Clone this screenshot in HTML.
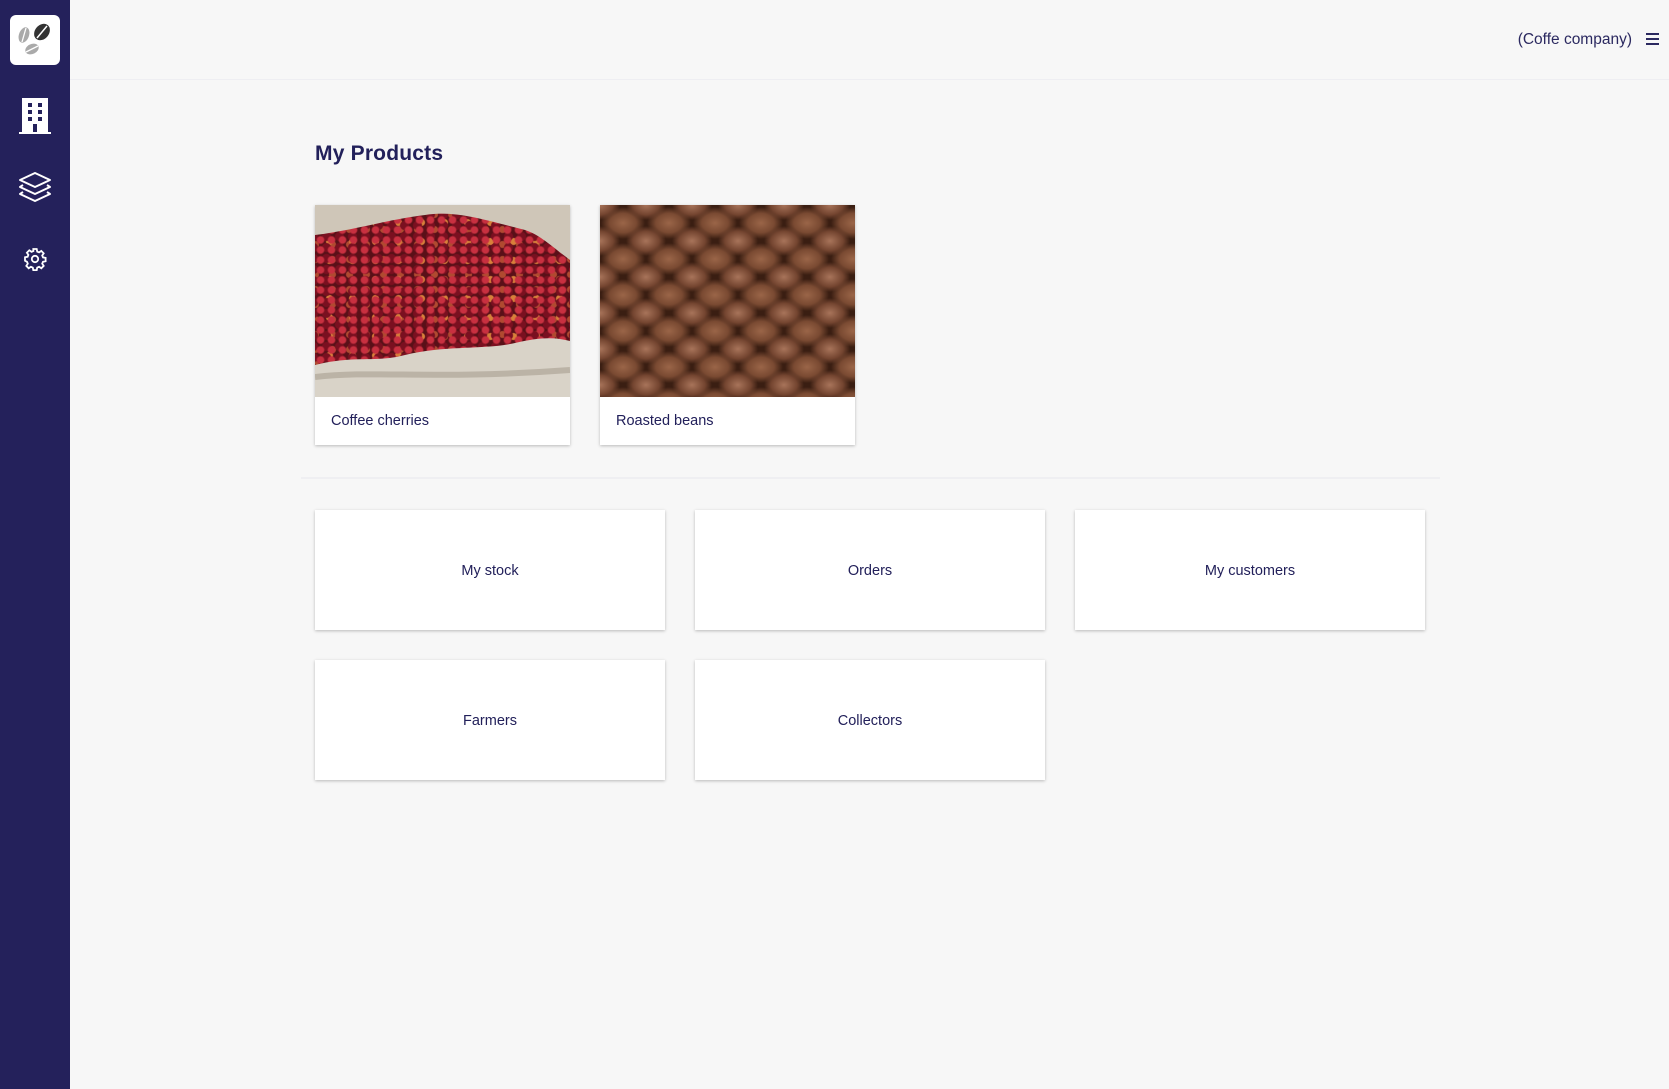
<!DOCTYPE html>
<html><head><meta charset="utf-8">
<style>
*{margin:0;padding:0;box-sizing:border-box}
html,body{width:1669px;height:1089px;overflow:hidden;background:#f7f7f7;font-family:"Liberation Sans",sans-serif;color:#22205a}
.side{position:absolute;left:0;top:0;width:70px;height:1089px;background:#24215b}
.logo{position:absolute;left:10px;top:15px;width:50px;height:50px;background:#fff;border-radius:6px}
.ic{position:absolute;left:0;width:70px;display:flex;justify-content:center}
.hdr{position:absolute;left:70px;top:0;right:0;height:80px;border-bottom:1px solid #eeeef2}
.co{position:absolute;right:37px;top:31px;font-size:15.5px;color:#2b2960}
.menu{position:absolute;right:10px;top:33px;width:13px}
.menu i{display:block;height:2px;background:#2b2960;margin-bottom:3px}
h1{position:absolute;left:315px;top:142px;font-size:21px;font-weight:bold;color:#22205a;letter-spacing:.2px}
.card{position:absolute;top:205px;width:255px;height:240px;background:#fff;box-shadow:0 1px 3px rgba(0,0,0,.25)}
.card .im{height:192px;overflow:hidden;position:relative}
.card .lb{position:absolute;left:16px;top:208px;font-size:14.5px;color:#22205a}
.cher{background:
radial-gradient(circle at 50% 50%,#c83040 0 3px,transparent 4.5px) 0 0/11px 10px,
radial-gradient(circle at 50% 50%,#7a1020 0 4px,transparent 5px) 5px 4px/13px 11px,
radial-gradient(circle at 50% 50%,#d8803a 0 3px,transparent 4px) 3px 8px/23px 19px,
radial-gradient(circle at 50% 50%,#b04a30 0 3px,transparent 4px) 9px 2px/17px 15px,
#5a1018}
.beans{background:
radial-gradient(ellipse 22px 16px at 50% 50%,#9a6548 0,#7a4a32 60%,#3a1e12 100%) 0 0/46px 36px,
#3a1e12}
.beans2{position:absolute;inset:0;background:radial-gradient(ellipse 20px 15px at 50% 50%,#a8745a 0,#744530 65%,transparent 100%) 23px 18px/46px 36px}
.div{position:absolute;left:301px;top:477px;width:1139px;height:2px;background:#efeff2}
.t{position:absolute;width:350px;height:120px;background:#fff;box-shadow:0 1px 3px rgba(0,0,0,.25);display:flex;align-items:center;justify-content:center;font-size:14.5px;color:#22205a;padding-top:2px}
</style></head><body>
<div class="side">
 <div class="logo"><svg width="50" height="50" viewBox="0 0 50 50">
  <ellipse cx="14" cy="20" rx="5" ry="8" fill="#aaa" transform="rotate(20 14 20)"/>
  <line x1="12" y1="27" x2="16" y2="13" stroke="#fff" stroke-width="1.3"/>
  <ellipse cx="32" cy="17" rx="7" ry="9" fill="#333" transform="rotate(40 32 17)"/>
  <line x1="27" y1="23" x2="37" y2="11" stroke="#fff" stroke-width="1.5"/>
  <ellipse cx="22" cy="34" rx="7" ry="5" fill="#aaa" transform="rotate(-25 22 34)"/>
  <line x1="16" y1="37" x2="28" y2="31" stroke="#fff" stroke-width="1.3"/>
 </svg></div>
 <div class="ic" style="top:98px"><svg width="32" height="37" viewBox="0 0 32 37"><rect x="3" y="0" width="26" height="35" fill="#fff"/><rect x="0" y="34" width="32" height="2" fill="#fff"/>
 <g fill="#24215b"><rect x="9" y="5" width="4" height="4"/><rect x="19" y="5" width="4" height="4"/><rect x="9" y="12" width="4" height="4"/><rect x="19" y="12" width="4" height="4"/><rect x="9" y="19" width="4" height="4"/><rect x="19" y="19" width="4" height="4"/><rect x="14" y="26" width="4" height="8"/></g></svg></div>
 <div class="ic" style="top:170px"><svg width="34" height="34" viewBox="0 0 34 34" fill="none" stroke="#fff" stroke-width="2" stroke-linejoin="round"><path d="M17 3 L32 10 L17 17 L2 10 Z"/><path d="M5 15 L2 17 L17 24 L32 17 L29 15"/><path d="M5 22 L2 24 L17 31 L32 24 L29 22"/></svg></div>
 <div class="ic" style="top:247px"><svg width="24" height="24" viewBox="0 0 24 24" fill="none" stroke="#fff" stroke-width="1.8"><circle cx="12" cy="12" r="3.2"/><path d="M10.3 2h3.4l.5 2.6 1.9.8 2.2-1.5 2.4 2.4-1.5 2.2.8 1.9 2.6.5v3.4l-2.6.5-.8 1.9 1.5 2.2-2.4 2.4-2.2-1.5-1.9.8-.5 2.6h-3.4l-.5-2.6-1.9-.8-2.2 1.5-2.4-2.4 1.5-2.2-.8-1.9L2 13.7v-3.4l2.6-.5.8-1.9-1.5-2.2 2.4-2.4 2.2 1.5 1.9-.8z"/></svg></div>
</div>
<div class="hdr"><div class="co">(Coffe company)</div><div class="menu"><i></i><i></i><i></i></div></div>
<h1>My Products</h1>
<div class="card" style="left:315px"><div class="im cher">
 <svg width="255" height="192" style="position:absolute;left:0;top:0"><path d="M0 0H255V55C235 40 225 30 210 25 170 15 140 5 110 10 70 15 40 25 0 30Z" fill="#cfc6b8"/><path d="M0 160C40 150 60 158 90 150 130 140 170 145 200 138 225 132 240 132 255 136V192H0Z" fill="#d9d3c8"/><path d="M0 172C60 165 120 175 255 165" stroke="#bbb3a6" stroke-width="6" fill="none"/></svg>
</div><div class="lb">Coffee cherries</div></div>
<div class="card" style="left:600px"><div class="im beans"><div class="beans2"></div></div><div class="lb">Roasted beans</div></div>
<div class="div"></div>
<div class="t" style="left:315px;top:510px">My stock</div>
<div class="t" style="left:695px;top:510px">Orders</div>
<div class="t" style="left:1075px;top:510px">My customers</div>
<div class="t" style="left:315px;top:660px">Farmers</div>
<div class="t" style="left:695px;top:660px">Collectors</div>
</body></html>
